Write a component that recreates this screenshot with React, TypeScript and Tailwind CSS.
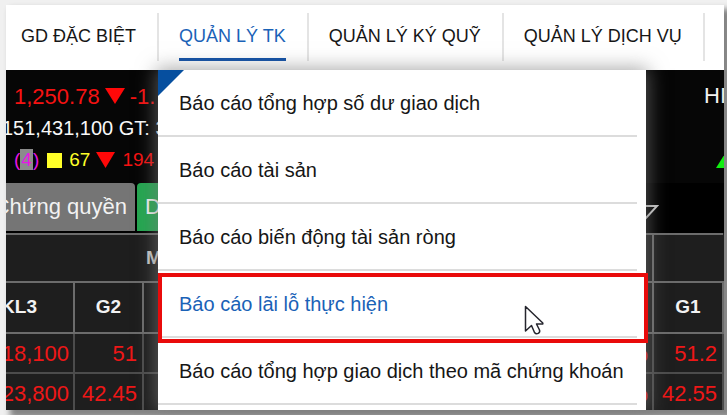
import clsx from 'clsx';

const NAV_ITEMS = ['GD ĐẶC BIỆT', 'QUẢN LÝ TK', 'QUẢN LÝ KÝ QUỸ', 'QUẢN LÝ DỊCH VỤ'];

const MENU_ITEMS = [
  'Báo cáo tổng hợp số dư giao dịch',
  'Báo cáo tài sản',
  'Báo cáo biến động tài sản ròng',
  'Báo cáo lãi lỗ thực hiện',
  'Báo cáo tổng hợp giao dịch theo mã chứng khoán',
];

const ROWS = [
  { kl3: '18,100', g2: '51', pct: '%', g1: '51.2' },
  { kl3: '23,800', g2: '42.45', pct: '%', g1: '42.55' },
];

function ReportMenu() {
  return (
    <div className="absolute inset-y-0 left-[152px] z-10 w-[488px] bg-white shadow-[0_0_18px_2px_rgba(125,125,125,0.65)]">
      <svg className="absolute left-0 top-0 h-[26px] w-[26px]" viewBox="0 0 26 26" aria-hidden="true">
        <path d="M0 0h26L0 26z" fill="#064f9f" />
      </svg>
      <ul className="relative pr-[9px]">
        {MENU_ITEMS.map((item, index) => (
          <li key={item} className="relative h-[67px] border-b-2 border-[#dcdcdc]">
            <a
              href="#"
              className={clsx(
                'flex h-full items-center whitespace-nowrap pl-[21px] text-[20px]',
                index === 3 ? 'text-[#1a62b7]' : 'text-[#161616]'
              )}
            >
              {item}
            </a>
          </li>
        ))}
      </ul>
      {/* Highlight around the hovered entry */}
      <div className="absolute -right-[2px] left-0 top-[203px] h-[70px] border-4 border-[#e90b0b]" />
      <svg
        className="absolute left-[366px] top-[235px] h-[31px] w-[20px]"
        viewBox="0 0 20 31"
        fill="white"
        stroke="#26262e"
        strokeWidth="1.5"
        strokeLinejoin="round"
        aria-hidden="true"
      >
        <path d="M1.500 1.500V26L7.500 20.500L10.500 27.500Q12 29.500 14.200 28.400Q16.300 27.300 15.500 25L12.500 19H18.800V18Z" />
      </svg>
    </div>
  );
}

function MarketStats() {
  return (
    <div className="flex h-[113px] justify-between overflow-hidden bg-[#060606]">
      <div className="whitespace-nowrap pt-[10px]">
        <div className="flex h-8 items-center gap-[5px] pl-2 text-[22px] text-[#f51212]">
          <span>1,250.78</span>
          <svg className="h-4 w-5" viewBox="0 0 20 16" aria-hidden="true">
            <path d="M0 0h20L10 16z" fill="#ff0808" />
          </svg>
          <span>-1.</span>
        </div>
        <div className="-ml-[4px] h-8 text-[20px] leading-8 text-[#f8f8f8]">151,431,100 GT: 3</div>
        <div className="flex h-8 items-center pl-2 text-[19px]">
          <span className="text-[#e815e8]">
            (<span className="bg-[#8b8b8b] px-px">4</span>)
          </span>
          <span className="ml-2 h-[15px] w-[15px] bg-[#ffff28]" />
          <span className="ml-[7px] text-[#ffff28]">67</span>
          <svg className="ml-[6px] h-4 w-[19px]" viewBox="0 0 19 16" aria-hidden="true">
            <path d="M0 0h19L9.500 16z" fill="#ff0808" />
          </svg>
          <span className="ml-[7px] text-[#f51212]">194</span>
        </div>
      </div>
      <div className="flex w-5 flex-col pt-[10px] text-[22px] leading-8 text-[#f2f2f2]">
        <span>HI</span>
        <svg className="ml-3 mt-[40px] h-4 w-5 shrink-0" viewBox="0 0 20 16" aria-hidden="true">
          <path d="M10 0L20 16H0z" fill="#10ee10" />
        </svg>
      </div>
    </div>
  );
}

function PriceTable() {
  return (
    <table className="w-full table-fixed border-collapse border-y-2 border-[#6c6c6c] bg-[#1e1e1e] text-[19px] text-[#f2f2f2]">
      <colgroup>
        <col className="w-[68px]" />
        <col className="w-[69px]" />
        <col />
        <col className="w-[70px]" />
      </colgroup>
      <thead>
        <tr className="h-[48px] border-b-2 border-[#6c6c6c]">
          <th colSpan={2} />
          <th className="pl-[3px] text-left text-[#c6c6c6]">M</th>
          <th className="border-l-2 border-[#6c6c6c]" />
        </tr>
        <tr className="h-[51px] border-b-2 border-[#6c6c6c]">
          <th className="border-r-2 border-[#6c6c6c] pr-9 text-right">
            <span className="float-right">KL3</span>
          </th>
          <th className="border-r-2 border-[#6c6c6c]">G2</th>
          <th />
          <th className="border-x-2 border-[#6c6c6c]">G1</th>
        </tr>
      </thead>
      <tbody className="text-right text-[22px] text-[#ee1717]">
        {ROWS.map((row) => (
          <tr key={row.g2} className="h-[40px] border-b-2 border-[#4c4c4c]">
            <td className="border-r-2 border-[#4c4c4c] pr-1">
              <span className="float-right">{row.kl3}</span>
            </td>
            <td className="border-r-2 border-[#4c4c4c] pr-[5px]">{row.g2}</td>
            <td className="pr-1">{row.pct}</td>
            <td className="border-x-2 border-[#4c4c4c] pr-[5px]">{row.g1}</td>
          </tr>
        ))}
      </tbody>
    </table>
  );
}

export default function App() {
  return (
    <div className="flex h-screen flex-col overflow-hidden bg-[#f0f0f0] pb-[5px] pl-[6px] pr-[3px] pt-[5px] font-['Liberation_Sans',Arial,sans-serif]">
      <div className="flex min-h-0 flex-1 flex-col shadow-[6px_6px_6px_2px_#858585]">
        <nav className="flex h-[65px] shrink-0 items-start overflow-hidden bg-white pt-2">
          {NAV_ITEMS.map((item, index) => (
            <a
              key={item}
              href="#"
              className={clsx(
                'flex h-12 shrink-0 items-end whitespace-nowrap border-r-2 border-[#e4e4e4] pr-[21px] text-[18px]',
                index === 0 ? 'pl-[15px]' : 'pl-5',
                index === 1 ? 'text-[#1a62b7]' : 'text-[#161616]'
              )}
            >
              <span className={clsx('h-[37px] border-b-[3px] leading-6', index === 1 ? 'border-[#0b4ca5]' : 'border-transparent')}>
                {item}
              </span>
            </a>
          ))}
        </nav>
        <main className="relative min-h-0 flex-1 bg-black">
          <div className="h-full overflow-hidden">
            <MarketStats />
            <div className="relative flex h-[50px] gap-[2px] bg-black pb-[2px] text-[22px] text-[#f2f2f2]">
              <button className="flex w-[129px] justify-end overflow-hidden whitespace-nowrap rounded-tr-sm bg-[#757575] pr-2 leading-[48px]">
                Chứng quyền
              </button>
              <button className="w-[60px] rounded-tl-sm bg-[#24a650] pl-2 text-left leading-[48px]">D</button>
              <svg className="absolute right-[65px] top-[21px] h-4 w-6" viewBox="0 0 24 16" fill="none" stroke="#c8c8c8" strokeWidth="2" aria-hidden="true">
                <path d="M1 2H22L11 14z" />
              </svg>
            </div>
            <PriceTable />
          </div>
          <ReportMenu />
        </main>
      </div>
    </div>
  );
}
